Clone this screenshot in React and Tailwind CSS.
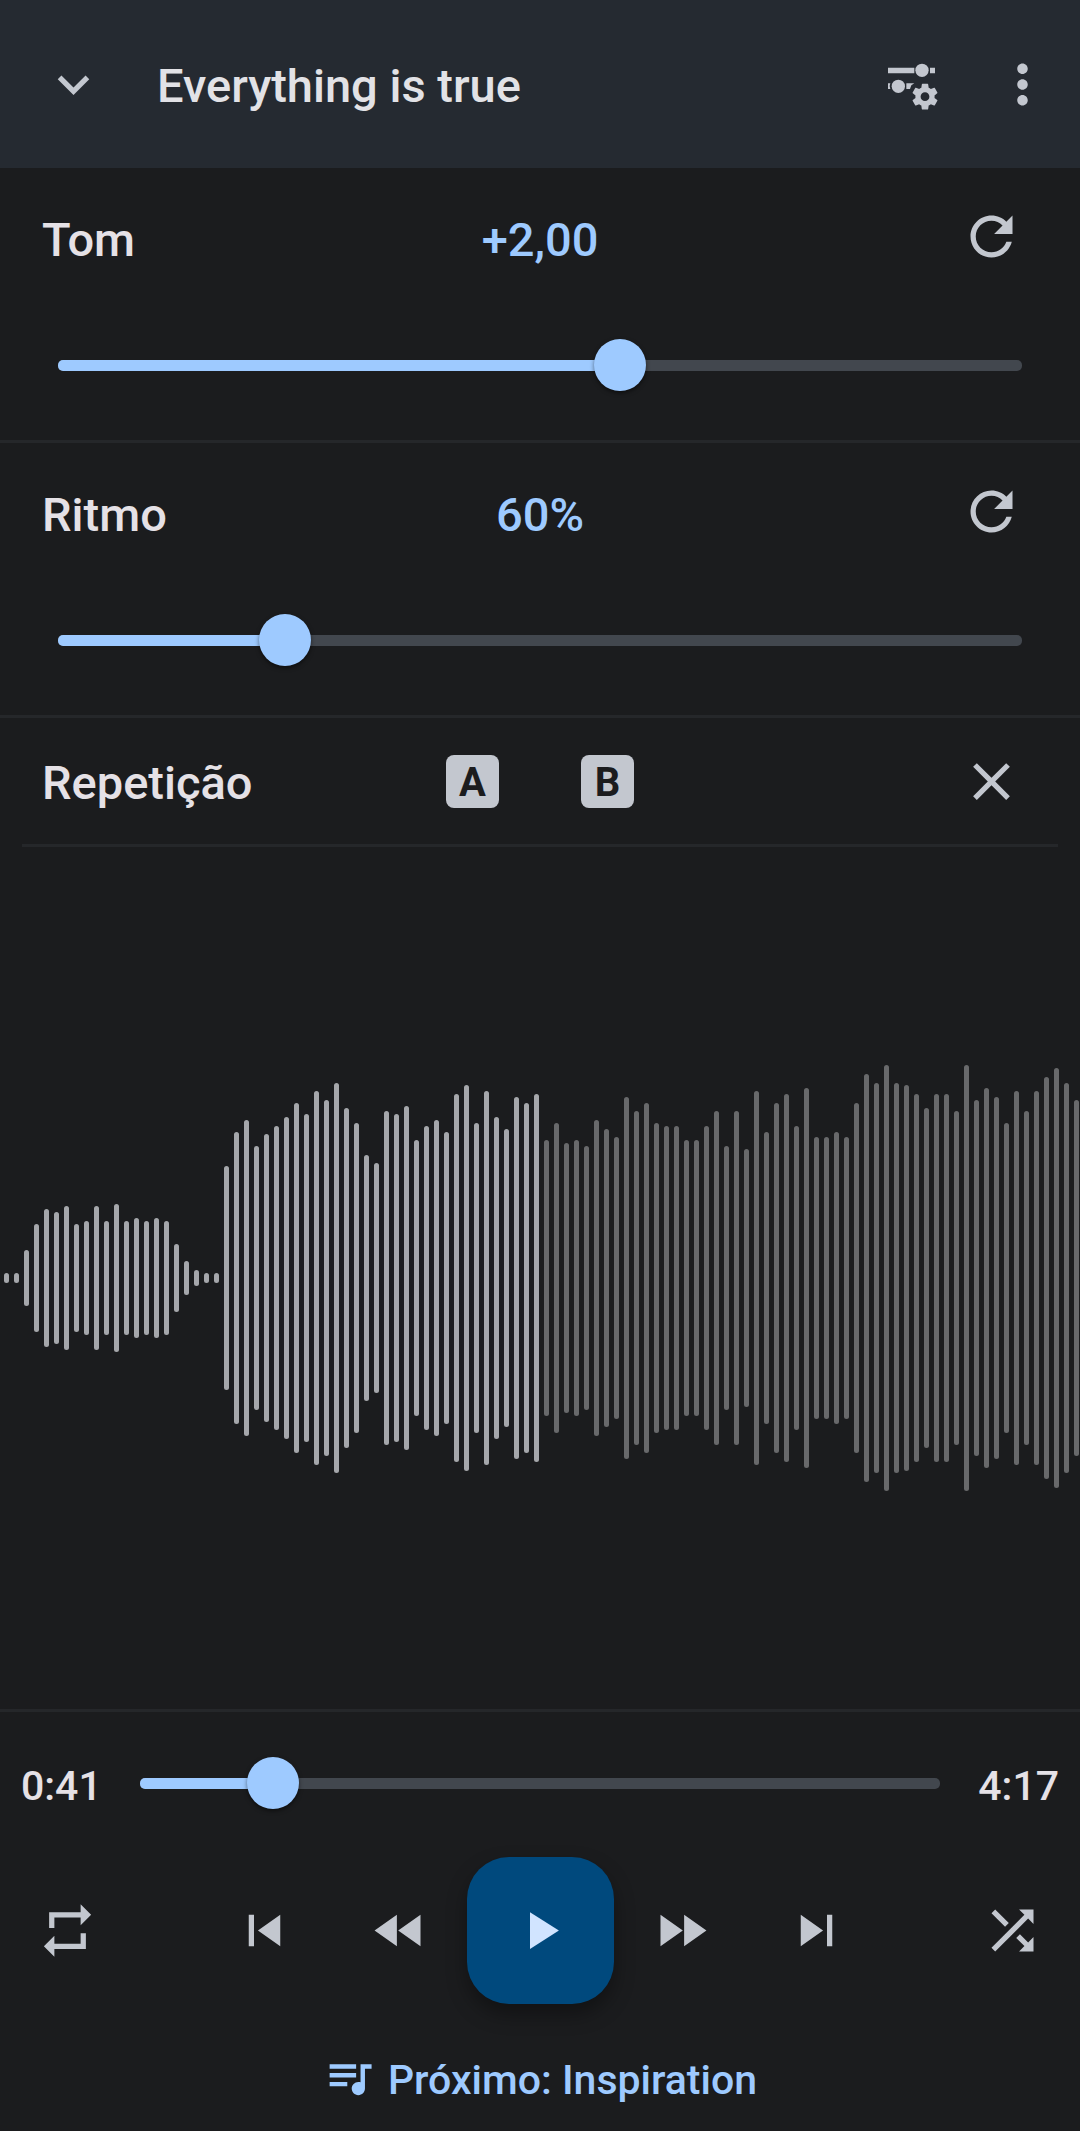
import { useState } from "react";

const ICONS = {
  expand: "M16.59 8.59 12 13.17 7.41 8.59 6 10l6 6 6-6z",
  more: "M12 8c1.1 0 2-.9 2-2s-.9-2-2-2-2 .9-2 2 .9 2 2 2zm0 2c-1.1 0-2 .9-2 2s.9 2 2 2 2-.9 2-2-.9-2-2-2zm0 6c-1.1 0-2 .9-2 2s.9 2 2 2 2-.9 2-2-.9-2-2-2z",
  refresh:
    "M17.65 6.35C16.2 4.9 14.21 4 12 4c-4.42 0-7.99 3.58-7.99 8s3.57 8 7.99 8c3.73 0 6.84-2.55 7.73-6h-2.08c-.82 2.33-3.04 4-5.65 4-3.31 0-6-2.69-6-6s2.69-6 6-6c1.66 0 3.14.69 4.22 1.78L13 11h7V4l-2.35 2.35z",
  close: "M19 6.41 17.59 5 12 10.59 6.41 5 5 6.41 10.59 12 5 17.59 6.41 19 12 13.41 17.59 19 19 17.59 13.41 12z",
  repeat: "M7 7h10v3l4-4-4-4v3H5v6h2V7zm10 10H7v-3l-4 4 4 4v-3h12v-6h-2v4z",
  previous: "M6 6h2v12H6zm3.5 6 8.5 6V6z",
  rewind: "M11 18V6l-8.5 6 8.5 6zm.5-6 8.5 6V6l-8.5 6z",
  play: "M8 5v14l11-7z",
  forward: "m4 18 8.5-6L4 6v12zm9-12v12l8.5-6L13 6z",
  next: "m6 18 8.5-6L6 6v12zM16 6v12h2V6h-2z",
  shuffle:
    "M10.59 9.17 5.41 4 4 5.41l5.17 5.17 1.42-1.41zM14.5 4l2.04 2.04L4 18.59 5.41 20 17.96 7.46 20 9.5V4h-5.5zm.33 9.41-1.41 1.41 3.13 3.13L14.5 20H20v-5.5l-2.04 2.04-3.13-3.13z",
  queue:
    "M15 6H3v2h12V6zm0 4H3v2h12v-2zM3 16h8v-2H3v2zM17 6v8.18c-.31-.11-.65-.18-1-.18-1.66 0-3 1.34-3 3s1.34 3 3 3 3-1.34 3-3V8h3V6h-5z",
  gear: "M19.14 12.94c.04-.3.06-.61.06-.94 0-.32-.02-.64-.07-.94l2.03-1.58c.18-.14.23-.41.12-.61l-1.92-3.32c-.12-.22-.37-.29-.59-.22l-2.39.96c-.5-.38-1.03-.7-1.62-.94l-.36-2.54c-.04-.24-.24-.41-.48-.41h-3.84c-.24 0-.43.17-.47.41l-.36 2.54c-.59.24-1.13.57-1.62.94l-2.39-.96c-.22-.08-.47 0-.59.22L2.74 8.87c-.12.21-.08.47.12.61l2.03 1.58c-.05.3-.09.63-.09.94s.02.64.07.94l-2.03 1.58c-.18.14-.23.41-.12.61l1.92 3.32c.12.22.37.29.59.22l2.39-.96c.5.38 1.03.7 1.62.94l.36 2.54c.05.24.24.41.48.41h3.84c.24 0 .44-.17.47-.41l.36-2.54c.59-.24 1.13-.56 1.62-.94l2.39.96c.22.08.47 0 .59-.22l1.92-3.32c.12-.22.07-.47-.12-.61l-2.01-1.58zM12 15.3c-1.82 0-3.3-1.48-3.3-3.3s1.48-3.3 3.3-3.3 3.3 1.48 3.3 3.3-1.48 3.3-3.3 3.3z",
};

// Half heights of the waveform bars.
const WAVE = [
  5, 5, 28, 54, 69, 66, 72, 54, 57, 72, 57, 74, 57, 60, 57, 60, 57, 34, 17, 8, 5, 5, 112, 146, 158, 132, 144, 152,
  161, 175, 164, 187, 178, 195, 170, 155, 123, 115, 167, 164, 172, 138, 152, 158, 146, 184, 193, 155, 187, 161, 149,
  181, 175, 184, 138, 155, 135, 138, 132, 158, 149, 141, 181, 167, 175, 155, 152, 152, 138, 138, 152, 167, 132, 167,
  129, 187, 146, 175, 184, 152, 190, 141, 141, 146, 141, 175, 204, 195, 213, 195, 193, 184, 170, 184, 184, 167, 213,
  178, 190, 181, 155, 187, 167, 187, 201, 210, 195, 178,
];
const PLAYED_BARS = 54;

function Icon({ name, className = "size-[63px]" }) {
  return (
    <svg viewBox="0 0 24 24" fill="currentColor" aria-hidden="true" className={`block shrink-0 ${className}`}>
      <path d={ICONS[name]} />
    </svg>
  );
}

function MixerSettingsIcon() {
  return (
    <svg viewBox="0 0 189 189" fill="currentColor" aria-hidden="true" className="block size-[63px] shrink-0">
      <path d="M18 44h79v17H18zM144 44h15v17h-15zM18 91h7l-2 8 2 9h-7zM73 91h24l-9 6-4 11H73z" />
      <circle cx="120" cy="52" r="20" />
      <circle cx="49" cy="100" r="20" />
      <g transform="translate(129 131) scale(4) translate(-12 -12)">
        <path d={ICONS.gear} />
      </g>
    </svg>
  );
}

function IconButton({ label, name, className = "" }) {
  return (
    <button type="button" aria-label={label} className={`shrink-0 text-[#c3c7cf] ${className}`}>
      <Icon name={name} />
    </button>
  );
}

function Slider({ label, min, max, step, value, onChange }) {
  const percent = ((value - min) / (max - min)) * 100;
  return (
    <div className="relative flex h-[52px] min-w-0 flex-1 items-center">
      <div className="absolute inset-x-0 h-[11px] overflow-hidden rounded-[5px] bg-[#42474e]">
        <div className="h-full bg-[#9ecaff]" style={{ width: `${percent}%` }} />
      </div>
      <input
        type="range"
        aria-label={label}
        min={min}
        max={max}
        step={step}
        value={value}
        onChange={(event) => onChange(Number(event.target.value))}
        className="relative -mx-[26px] h-[52px] w-[calc(100%+52px)] shrink-0 cursor-pointer appearance-none bg-transparent [&::-webkit-slider-thumb]:size-[52px] [&::-webkit-slider-thumb]:appearance-none [&::-webkit-slider-thumb]:rounded-full [&::-webkit-slider-thumb]:bg-[#9ecaff] [&::-webkit-slider-thumb]:shadow-[0_2px_4px_rgba(0,0,0,0.5)]"
      />
    </div>
  );
}

function Adjustment({ title, format, initial, min, max, step }) {
  const [value, setValue] = useState(initial);
  return (
    <section className="border-b-[3px] border-[#25272a] pb-[14px]">
      <div className="grid h-[136px] grid-cols-3 items-center px-[42px] text-[47px] leading-none font-medium">
        <h2 className="pt-1.5">{title}</h2>
        <output className="pt-1.5 text-center text-[#9ecaff]">{format(value)}</output>
        <IconButton label={`Redefinir ${title}`} name="refresh" className="mr-[15px] justify-self-end" />
      </div>
      <div className="flex h-[122px] items-center px-[58px]">
        <Slider label={title} min={min} max={max} step={step} value={value} onChange={setValue} />
      </div>
    </section>
  );
}

function LoopPoint({ children }) {
  return (
    <button
      type="button"
      aria-label={`Ponto ${children}`}
      className="flex size-[53px] items-center justify-center rounded-lg bg-[#c3c7cf] pt-1 text-[40px] leading-none font-bold text-[#1b1c1e]"
    >
      {children}
    </button>
  );
}

function Waveform() {
  return (
    <svg viewBox="0 0 1080 426" role="img" aria-label="Forma de onda" className="block w-full">
      {WAVE.map((half, i) => (
        <rect
          key={i}
          x={i * 10 + 4}
          y={213 - half}
          width="5"
          height={half * 2}
          rx="2.5"
          fill={i < PLAYED_BARS ? "#a5a7ab" : "#68696b"}
        />
      ))}
    </svg>
  );
}

export default function App() {
  const [position, setPosition] = useState(166);
  return (
    <main className="flex min-h-screen flex-col bg-[#1b1c1e] font-['Roboto',sans-serif] text-[#e5e1e6]">
      <header className="flex h-[168px] items-center bg-[#252a31] pr-[26px] pl-[42px]">
        <IconButton label="Recolher" name="expand" />
        <h1 className="ml-[52px] min-w-0 flex-1 truncate pt-1 text-[47px] leading-[60px] font-medium text-[#e2e2e6]">
          Everything is true
        </h1>
        <button type="button" aria-label="Ajustes de áudio" className="mr-[46px] text-[#c3c7cf]">
          <MixerSettingsIcon />
        </button>
        <IconButton label="Mais opções" name="more" />
      </header>

      <Adjustment
        title="Tom"
        initial={2}
        min={-12}
        max={12}
        step={0.01}
        format={(v) => `${v >= 0 ? "+" : "-"}${Math.abs(v).toFixed(2).replace(".", ",")}`}
      />
      <Adjustment title="Ritmo" initial={60} min={20} max={190} step={1} format={(v) => `${v}%`} />

      <section className="grid h-[126px] grid-cols-3 items-center px-[42px]">
        <h2 className="pt-1 text-[47px] leading-[60px] font-medium">Repetição</h2>
        <div className="flex justify-center gap-[82px]">
          <LoopPoint>A</LoopPoint>
          <LoopPoint>B</LoopPoint>
        </div>
        <IconButton label="Limpar repetição" name="close" className="mr-[15px] justify-self-end" />
      </section>
      <hr className="mx-[22px] border-t-[3px] border-[#25272a]" />

      <section className="flex flex-1 items-center">
        <Waveform />
      </section>

      <footer className="border-t-[3px] border-[#25272a]">
        <div className="flex h-[142px] items-center justify-between gap-[38px] px-[21px] text-[41px] leading-none font-medium">
          <span className="pt-1.5">0:41</span>
          <Slider label="Posição" min={0} max={1000} step={1} value={position} onChange={setPosition} />
          <span className="pt-1.5">4:17</span>
        </div>
        <div className="flex h-[153px] items-center justify-between px-9">
          <IconButton label="Repetir" name="repeat" />
          <div className="flex items-center gap-9">
            <IconButton label="Anterior" name="previous" className="mr-9" />
            <IconButton label="Retroceder" name="rewind" />
            <button
              type="button"
              aria-label="Reproduzir"
              className="flex size-[147px] items-center justify-center rounded-[42px] bg-[#00497d] text-[#d1e4ff] shadow-[0_10px_20px_rgba(0,0,0,0.35)]"
            >
              <Icon name="play" />
            </button>
            <IconButton label="Avançar" name="forward" />
            <IconButton label="Próxima" name="next" className="ml-9" />
          </div>
          <IconButton label="Aleatório" name="shuffle" />
        </div>
        <div className="flex h-[124px] items-center justify-center pt-4">
          <button type="button" className="flex items-center gap-3 text-[41px] leading-none font-medium text-[#9ecaff]">
            <Icon name="queue" className="size-[53px]" />
            <span className="pt-1.5">Próximo: Inspiration</span>
          </button>
        </div>
      </footer>
    </main>
  );
}
